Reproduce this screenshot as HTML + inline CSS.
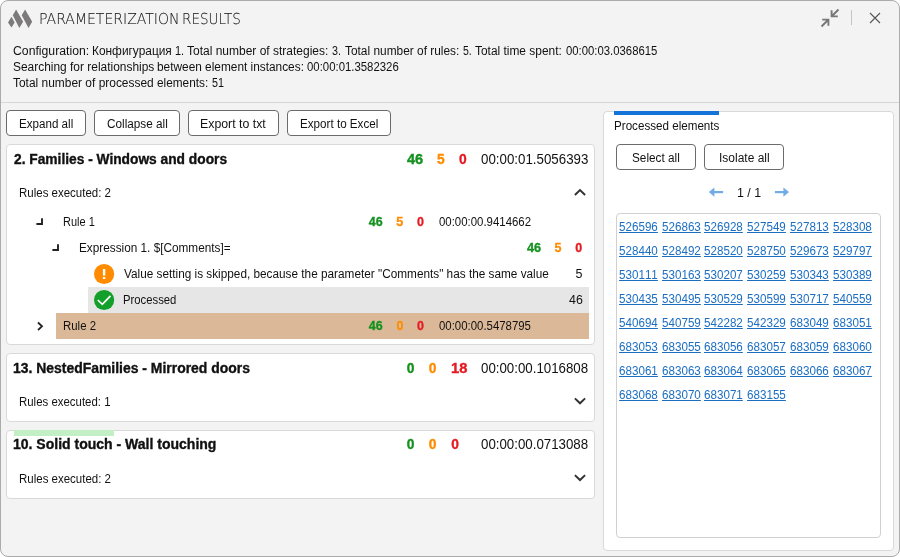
<!DOCTYPE html>
<html lang="en"><head><meta charset="utf-8"><title>Parameterization results</title>
<style>
*{margin:0;padding:0;box-sizing:border-box}
html,body{width:900px;height:557px;background:#fff;overflow:hidden}
body{font-family:"Liberation Sans",sans-serif;color:#111;position:relative}
#win{position:absolute;left:0;top:0;width:900px;height:557px;background:#f3f3f3;border:1px solid #ababab;border-radius:8px}
.a{position:absolute;white-space:pre;line-height:16px;height:16px;transform-origin:0 0}
.t{font-size:12.5px}
.b12{font-size:12.5px;font-weight:bold;-webkit-text-stroke:0.3px}
.b14{font-size:13.8px;font-weight:bold;-webkit-text-stroke:0.35px}
.n14{font-size:13.8px}
.title{font-family:"DejaVu Sans Light","DejaVu Sans","Liberation Sans",sans-serif;font-weight:200;font-size:15px;color:#1a1a1a;-webkit-text-stroke:0.1px;text-rendering:geometricPrecision}
.g{color:#14911e}.o{color:#ff8c00}.r{color:#e51a22}
.lnk{font-size:12.5px;color:#1b6ec2;text-decoration:underline;text-underline-offset:0.5px;text-decoration-thickness:1px;font-kerning:none}
.btn{position:absolute;background:#fff;border:1px solid #6b6b6b;border-radius:4px;height:26px}
.card{position:absolute;left:6px;width:589px;background:#fff;border:1px solid #d9d9d9;border-radius:4px}
.box{position:absolute}
svg{position:absolute;overflow:visible}
#txt{position:absolute;left:0;top:0;width:900px;height:557px;will-change:transform}
</style></head>
<body>
<div id="win"></div>
<!-- title bar icons -->
<svg width="900" height="40" style="left:0;top:0" viewBox="0 0 900 40">
  <g fill="#7c7a7a">
    <polygon points="8,22.5 11.5,16.8 14.6,22.4 11.5,27.6"/>
    <polygon points="16.1,9.5 12.8,15.3 19.3,27.9 23.1,21.8"/>
    <polygon points="25.1,9.5 21.7,15.2 28.5,27.9 32.2,21.8"/>
  </g>
  <g fill="none" stroke="#777" stroke-width="1.9">
    <path d="M838.5 9.5 L832 16 M831.6 10.3 V16.4 H837.8"/>
    <path d="M821.5 26.5 L828 20 M822.2 19.6 H828.4 V25.8"/>
  </g>
  <rect x="851" y="10" width="1" height="15" fill="#c4c4c4"/>
  <path d="M870 13 L880 23 M880 13 L870 23" stroke="#555" stroke-width="1.1" fill="none"/>
</svg>
<div class="box" style="left:1px;top:102px;width:898px;height:1px;background:#d6d6d6"></div>
<!-- toolbar buttons -->
<div class="btn" style="left:6px;top:110px;width:80px"></div>
<div class="btn" style="left:94px;top:110px;width:86px"></div>
<div class="btn" style="left:188px;top:110px;width:91px"></div>
<div class="btn" style="left:287px;top:110px;width:104px"></div>
<!-- cards -->
<div class="card" style="top:144px;height:201px"></div>
<div class="card" style="top:353px;height:69px"></div>
<div class="card" style="top:430px;height:69px"></div>
<div class="box" style="left:14px;top:430px;width:100px;height:6px;background:#c2f0c4"></div>
<!-- rows -->
<div class="box" style="left:88px;top:287px;width:501px;height:26px;background:#e6e6e6"></div>
<div class="box" style="left:56px;top:313px;width:533px;height:26px;background:#dbb998"></div>
<!-- tree glyphs and icons -->
<svg width="600" height="557" style="left:0;top:0" viewBox="0 0 600 557">
  <path d="M36.4 224 H42 V218.3" fill="none" stroke="#222" stroke-width="1.9"/>
  <path d="M52.4 250 H58 V244.3" fill="none" stroke="#222" stroke-width="1.9"/>
  <path d="M38 322.5 L42 326.3 L38 330" fill="none" stroke="#222" stroke-width="1.8"/>
  <path d="M574.9 194.9 L580 190.1 L585.1 194.9" fill="none" stroke="#333" stroke-width="2"/>
  <path d="M574.9 398.4 L580 403.3 L585.1 398.4" fill="none" stroke="#333" stroke-width="2"/>
  <path d="M574.9 475.1 L580 480 L585.1 475.1" fill="none" stroke="#333" stroke-width="2"/>
  <circle cx="104.1" cy="274" r="10.1" fill="#ff8c00"/>
  <rect x="102.9" y="269" width="2.4" height="6.6" fill="#fff"/>
  <rect x="102.9" y="277" width="2.4" height="2" fill="#fff"/>
  <circle cx="104.1" cy="300" r="10.1" fill="#13a02a"/>
  <path d="M97.8 300 L102.3 304.3 L110.5 295.9" fill="none" stroke="#fff" stroke-width="1.7"/>
</svg>
<!-- right panel -->
<div class="box" style="left:603px;top:111px;width:291px;height:440px;background:#fff;border:1px solid #d9d9d9;border-radius:4px"></div>
<div class="box" style="left:614px;top:111px;width:105px;height:4px;background:#1373d8"></div>
<div class="btn" style="left:616px;top:144px;width:80px"></div>
<div class="btn" style="left:704px;top:144px;width:80px"></div>
<div class="box" style="left:616px;top:213px;width:265px;height:325px;background:#fff;border:1px solid #d0d0d0;border-radius:4px"></div>
<svg width="100" height="20" style="left:700px;top:182px" viewBox="700 182 100 20">
  <g fill="#72ace4">
    <polygon points="708.8,192.1 714.4,187.4 714.4,196.8"/>
    <rect x="714" y="191" width="9.1" height="2.2"/>
    <polygon points="789,192.1 783.4,187.4 783.4,196.8"/>
    <rect x="774.9" y="191" width="9" height="2.2"/>
  </g>
</svg>

<div id="txt">
<span class="a title" style="left:38.79px;top:11.00px;transform-origin:0 13.00px;transform:scale(0.9343,1.000)">PARAMETERIZATION</span>
<span class="a title" style="left:181.64px;top:11.00px;transform-origin:0 13.00px;transform:scale(0.9018,1.000)">RESULTS</span>
<span class="a t" style="left:12.58px;top:42.50px;transform:scaleX(0.9783)">Configuration:</span>
<span class="a t" style="left:91.82px;top:42.50px;transform:scaleX(0.9512)">Конфигурация</span>
<span class="a t" style="left:175.47px;top:42.50px;transform:scaleX(0.8749)">1.</span>
<span class="a t" style="left:187.33px;top:42.50px;transform:scaleX(0.9597)">Total number of strategies:</span>
<span class="a t" style="left:331.99px;top:42.50px;transform:scaleX(0.8617)">3.</span>
<span class="a t" style="left:344.73px;top:42.50px;transform:scaleX(0.9513)">Total number of rules:</span>
<span class="a t" style="left:463.18px;top:42.50px;transform:scaleX(0.8413)">5.</span>
<span class="a t" style="left:475.33px;top:42.50px;transform:scaleX(0.9532)">Total time spent:</span>
<span class="a t" style="left:565.56px;top:42.50px;transform:scaleX(0.9060)">00:00:03.0368615</span>
<span class="a t" style="left:12.76px;top:58.50px;transform:scaleX(0.9545)">Searching for relationships</span>
<span class="a t" style="left:157.14px;top:58.50px;transform:scaleX(0.9482)">between element instances:</span>
<span class="a t" style="left:306.76px;top:58.50px;transform:scaleX(0.9102)">00:00:01.3582326</span>
<span class="a t" style="left:13.33px;top:74.50px;transform:scaleX(0.9554)">Total number of processed</span>
<span class="a t" style="left:157.30px;top:74.50px;transform:scaleX(0.9442)">elements:</span>
<span class="a t" style="left:211.57px;top:74.50px;transform:scaleX(0.8597)">51</span>
<span class="a t" style="left:19.05px;top:116.00px;transform:scaleX(0.9290)">Expand all</span>
<span class="a t" style="left:106.70px;top:116.00px;transform:scaleX(0.9406)">Collapse all</span>
<span class="a t" style="left:200.29px;top:116.00px;transform:scaleX(0.9865)">Export to txt</span>
<span class="a t" style="left:299.74px;top:116.00px;transform:scaleX(0.9317)">Export to Excel</span>
<span class="a b14" style="left:13.52px;top:151.75px;transform:scaleX(0.9966)">2. Families - Windows and doors</span>
<span class="a b14 g" style="left:406.78px;top:151.75px;transform:scaleX(1.0579)">46</span>
<span class="a b14 o" style="left:437.08px;top:151.75px">5</span>
<span class="a b14 r" style="left:458.95px;top:151.75px">0</span>
<span class="a n14" style="left:481.23px;top:151.75px;transform:scaleX(0.9649)">00:00:01.5056393</span>
<span class="a t" style="left:18.56px;top:185.00px;transform:scaleX(0.9196)">Rules executed: 2</span>
<span class="a t" style="left:62.90px;top:214.00px;transform:scaleX(0.8810)">Rule 1</span>
<span class="a b12 g" style="left:368.81px;top:214.00px">46</span>
<span class="a b12 o" style="left:396.32px;top:214.00px">5</span>
<span class="a b12 r" style="left:416.91px;top:214.00px">0</span>
<span class="a t" style="left:438.55px;top:214.00px;transform:scaleX(0.9129)">00:00:00.9414662</span>
<span class="a t" style="left:78.53px;top:240.00px;transform:scaleX(0.9422)">Expression 1. $[Comments]=</span>
<span class="a b12 g" style="left:526.81px;top:240.00px;transform:scaleX(1.0177)">46</span>
<span class="a b12 o" style="left:554.62px;top:240.00px">5</span>
<span class="a b12 r" style="left:575.26px;top:240.00px">0</span>
<span class="a t" style="left:123.70px;top:266.00px;transform:scaleX(0.9429)">Value setting is skipped, because the parameter "Comments" has the same value</span>
<span class="a t" style="left:575.50px;top:266.00px">5</span>
<span class="a t" style="left:122.82px;top:292.00px;transform:scaleX(0.9042)">Processed</span>
<span class="a t" style="left:569.21px;top:292.00px;transform:scaleX(0.9946)">46</span>
<span class="a t" style="left:62.86px;top:318.00px;transform:scaleX(0.9134)">Rule 2</span>
<span class="a b12 g" style="left:368.81px;top:318.00px">46</span>
<span class="a b12 o" style="left:396.51px;top:318.00px">0</span>
<span class="a b12 r" style="left:417.01px;top:318.00px">0</span>
<span class="a t" style="left:438.55px;top:318.00px;transform:scaleX(0.9120)">00:00:00.5478795</span>
<span class="a b14" style="left:13.12px;top:360.75px;transform:scaleX(1.0099)">13. NestedFamilies - Mirrored doors</span>
<span class="a b14 g" style="left:406.75px;top:360.75px">0</span>
<span class="a b14 o" style="left:428.75px;top:360.75px">0</span>
<span class="a b14 r" style="left:450.77px;top:360.75px;transform:scaleX(1.0664)">18</span>
<span class="a n14" style="left:481.18px;top:360.75px;transform:scaleX(0.9625)">00:00:00.1016808</span>
<span class="a t" style="left:18.56px;top:394.00px;transform:scaleX(0.9144)">Rules executed: 1</span>
<span class="a b14" style="left:13.12px;top:437.00px;transform:scaleX(1.0155)">10. Solid touch - Wall touching</span>
<span class="a b14 g" style="left:406.75px;top:437.00px">0</span>
<span class="a b14 o" style="left:428.75px;top:437.00px">0</span>
<span class="a b14 r" style="left:451.15px;top:437.00px">0</span>
<span class="a n14" style="left:481.18px;top:437.00px;transform:scaleX(0.9625)">00:00:00.0713088</span>
<span class="a t" style="left:18.56px;top:471.00px;transform:scaleX(0.9196)">Rules executed: 2</span>
<span class="a t" style="left:613.65px;top:118.20px;transform:scaleX(0.9303)">Processed elements</span>
<span class="a t" style="left:632.16px;top:150.00px;transform:scaleX(0.9426)">Select all</span>
<span class="a t" style="left:718.59px;top:150.00px;transform:scaleX(0.9602)">Isolate all</span>
<span class="a t" style="left:736.85px;top:184.80px;transform:scaleX(0.9927)">1 / 1</span>
<span class="a lnk" style="left:618.85px;top:218.50px;transform:scaleX(0.9310)">526596</span>
<span class="a lnk" style="left:661.65px;top:218.50px;transform:scaleX(0.9310)">526863</span>
<span class="a lnk" style="left:704.45px;top:218.50px;transform:scaleX(0.9310)">526928</span>
<span class="a lnk" style="left:747.25px;top:218.50px;transform:scaleX(0.9310)">527549</span>
<span class="a lnk" style="left:790.05px;top:218.50px;transform:scaleX(0.9310)">527813</span>
<span class="a lnk" style="left:832.85px;top:218.50px;transform:scaleX(0.9310)">528308</span>
<span class="a lnk" style="left:618.85px;top:242.50px;transform:scaleX(0.9310)">528440</span>
<span class="a lnk" style="left:661.65px;top:242.50px;transform:scaleX(0.9310)">528492</span>
<span class="a lnk" style="left:704.45px;top:242.50px;transform:scaleX(0.9310)">528520</span>
<span class="a lnk" style="left:747.25px;top:242.50px;transform:scaleX(0.9310)">528750</span>
<span class="a lnk" style="left:790.05px;top:242.50px;transform:scaleX(0.9310)">529673</span>
<span class="a lnk" style="left:832.85px;top:242.50px;transform:scaleX(0.9310)">529797</span>
<span class="a lnk" style="left:618.85px;top:266.50px;transform:scaleX(0.9310)">530111</span>
<span class="a lnk" style="left:661.65px;top:266.50px;transform:scaleX(0.9310)">530163</span>
<span class="a lnk" style="left:704.45px;top:266.50px;transform:scaleX(0.9310)">530207</span>
<span class="a lnk" style="left:747.25px;top:266.50px;transform:scaleX(0.9310)">530259</span>
<span class="a lnk" style="left:790.05px;top:266.50px;transform:scaleX(0.9310)">530343</span>
<span class="a lnk" style="left:832.85px;top:266.50px;transform:scaleX(0.9310)">530389</span>
<span class="a lnk" style="left:618.85px;top:290.50px;transform:scaleX(0.9310)">530435</span>
<span class="a lnk" style="left:661.65px;top:290.50px;transform:scaleX(0.9310)">530495</span>
<span class="a lnk" style="left:704.45px;top:290.50px;transform:scaleX(0.9310)">530529</span>
<span class="a lnk" style="left:747.25px;top:290.50px;transform:scaleX(0.9310)">530599</span>
<span class="a lnk" style="left:790.05px;top:290.50px;transform:scaleX(0.9310)">530717</span>
<span class="a lnk" style="left:832.85px;top:290.50px;transform:scaleX(0.9310)">540559</span>
<span class="a lnk" style="left:618.85px;top:314.50px;transform:scaleX(0.9310)">540694</span>
<span class="a lnk" style="left:661.65px;top:314.50px;transform:scaleX(0.9310)">540759</span>
<span class="a lnk" style="left:704.45px;top:314.50px;transform:scaleX(0.9310)">542282</span>
<span class="a lnk" style="left:747.25px;top:314.50px;transform:scaleX(0.9310)">542329</span>
<span class="a lnk" style="left:790.05px;top:314.50px;transform:scaleX(0.9310)">683049</span>
<span class="a lnk" style="left:832.85px;top:314.50px;transform:scaleX(0.9310)">683051</span>
<span class="a lnk" style="left:618.85px;top:338.50px;transform:scaleX(0.9310)">683053</span>
<span class="a lnk" style="left:661.65px;top:338.50px;transform:scaleX(0.9310)">683055</span>
<span class="a lnk" style="left:704.45px;top:338.50px;transform:scaleX(0.9310)">683056</span>
<span class="a lnk" style="left:747.25px;top:338.50px;transform:scaleX(0.9310)">683057</span>
<span class="a lnk" style="left:790.05px;top:338.50px;transform:scaleX(0.9310)">683059</span>
<span class="a lnk" style="left:832.85px;top:338.50px;transform:scaleX(0.9310)">683060</span>
<span class="a lnk" style="left:618.85px;top:362.50px;transform:scaleX(0.9310)">683061</span>
<span class="a lnk" style="left:661.65px;top:362.50px;transform:scaleX(0.9310)">683063</span>
<span class="a lnk" style="left:704.45px;top:362.50px;transform:scaleX(0.9310)">683064</span>
<span class="a lnk" style="left:747.25px;top:362.50px;transform:scaleX(0.9310)">683065</span>
<span class="a lnk" style="left:790.05px;top:362.50px;transform:scaleX(0.9310)">683066</span>
<span class="a lnk" style="left:832.85px;top:362.50px;transform:scaleX(0.9310)">683067</span>
<span class="a lnk" style="left:618.85px;top:386.50px;transform:scaleX(0.9310)">683068</span>
<span class="a lnk" style="left:661.65px;top:386.50px;transform:scaleX(0.9310)">683070</span>
<span class="a lnk" style="left:704.45px;top:386.50px;transform:scaleX(0.9310)">683071</span>
<span class="a lnk" style="left:747.25px;top:386.50px;transform:scaleX(0.9310)">683155</span>
</div>
</body></html>
